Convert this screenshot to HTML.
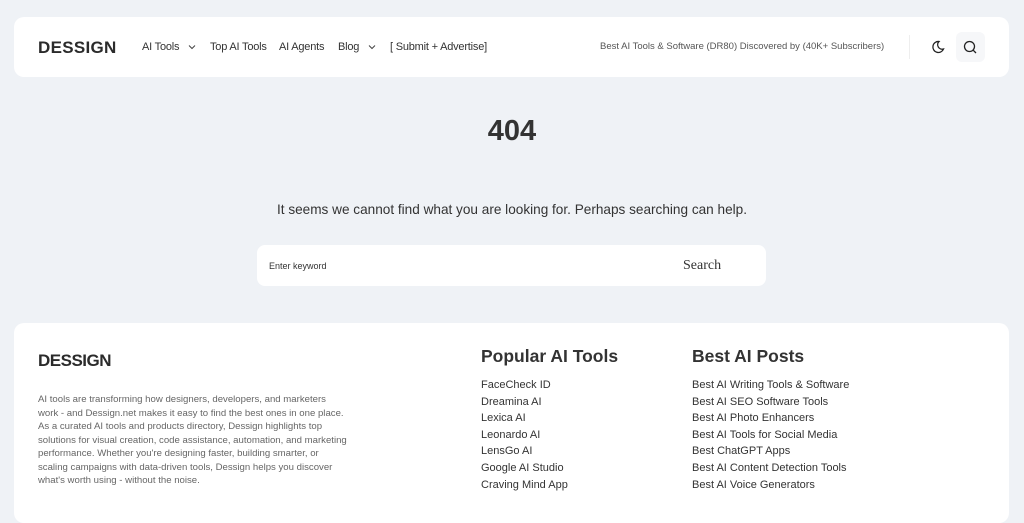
<!DOCTYPE html>
<html><head><meta charset="utf-8"><style>
*{margin:0;padding:0;box-sizing:border-box}
body{width:1024px;height:494px;overflow:hidden;background:#eff2f6;font-family:"Liberation Sans",sans-serif;color:#222;position:relative}
.hdr{position:absolute;left:14px;top:17px;width:995px;height:60px;background:#fff;border-radius:10px}
.logo{position:absolute;left:24px;top:21px;font-size:17px;font-weight:bold;color:#2b2b2b;letter-spacing:.3px}
.nav{position:absolute;top:24px;font-size:11px;color:#333;letter-spacing:-.2px}
.chev{position:absolute;top:27px}
.tag{position:absolute;left:586px;top:24px;font-size:9.5px;color:#555}
.sep{position:absolute;left:895px;top:18px;width:1px;height:24px;background:#eee}
.sbtn{position:absolute;left:942px;top:15px;width:29px;height:30px;background:#f6f7f9;border-radius:6px}
h1{position:absolute;left:0;width:1024px;top:115px;text-align:center;font-size:29px;font-weight:bold;color:#333}
.msg{position:absolute;left:0;width:1024px;top:202px;text-align:center;font-size:13.6px;color:#333}
.sb{position:absolute;left:257px;top:245px;width:509px;height:41px;background:#fff;border-radius:8px}
.sb .p{position:absolute;left:12px;top:16px;font-size:9px;color:#333}
.sb .s{position:absolute;left:426px;top:12px;font-family:"Liberation Serif",serif;font-size:14px;color:#333}
.ft{position:absolute;left:14px;top:323px;width:995px;height:200px;background:#fff;border-radius:10px}
.flogo{position:absolute;left:24px;top:28px;font-size:17px;font-weight:bold;letter-spacing:-.5px;color:#2b2b2b}
.fp{position:absolute;left:24px;top:70px;width:310px;font-size:9.6px;line-height:13.5px;color:#666}
.col{position:absolute;top:23px}
.col h3{font-size:17.5px;font-weight:bold;color:#333;margin-bottom:10px}
.col div{font-size:11px;line-height:16.6px;color:#333}
</style></head><body>
<div class="hdr">
<div class="logo">DESSIGN</div>
<div class="nav" style="left:128px">AI Tools</div>
<svg class="chev" style="left:174px" width="8" height="6" viewBox="0 0 8 6"><path d="M1 1.5L4 4.5 7 1.5" fill="none" stroke="#444" stroke-width="1"/></svg>
<div class="nav" style="left:196px">Top AI Tools</div>
<div class="nav" style="left:265px">AI Agents</div>
<div class="nav" style="left:324px">Blog</div>
<svg class="chev" style="left:354px" width="8" height="6" viewBox="0 0 8 6"><path d="M1 1.5L4 4.5 7 1.5" fill="none" stroke="#444" stroke-width="1"/></svg>
<div class="nav" style="left:376px">[ Submit + Advertise]</div>
<div class="tag">Best AI Tools &amp; Software (DR80) Discovered by (40K+ Subscribers)</div>
<div class="sep"></div>
<svg style="position:absolute;left:917px;top:23px" width="14" height="14" viewBox="0 0 14 14"><path d="M8 1.5A5.5 5.5 0 1 0 12.5 9 4.5 4.5 0 0 1 8 1.5z" fill="none" stroke="#222" stroke-width="1.3"/></svg>
<div class="sbtn"><svg style="position:absolute;left:7px;top:8px" width="15" height="15" viewBox="0 0 15 15"><circle cx="6.5" cy="6.5" r="5" fill="none" stroke="#222" stroke-width="1.3"/><path d="M10.3 10.3L13 13" stroke="#222" stroke-width="1.3"/></svg></div>
</div>
<h1>404</h1>
<div class="msg">It seems we cannot find what you are looking for. Perhaps searching can help.</div>
<div class="sb"><div class="p">Enter keyword</div><div class="s" style="top:13px">Search</div></div>
<div class="ft">
<div class="flogo">DESSIGN</div>
<div class="fp">AI tools are transforming how designers, developers, and marketers work - and Dessign.net makes it easy to find the best ones in one place. As a curated AI tools and products directory, Dessign highlights top solutions for visual creation, code assistance, automation, and marketing performance. Whether you're designing faster, building smarter, or scaling campaigns with data-driven tools, Dessign helps you discover what's worth using - without the noise.</div>
<div class="col" style="left:467px"><h3>Popular AI Tools</h3>
<div>FaceCheck ID</div><div>Dreamina AI</div><div>Lexica AI</div><div>Leonardo AI</div><div>LensGo AI</div><div>Google AI Studio</div><div>Craving Mind App</div></div>
<div class="col" style="left:678px"><h3>Best AI Posts</h3>
<div>Best AI Writing Tools &amp; Software</div><div>Best AI SEO Software Tools</div><div>Best AI Photo Enhancers</div><div>Best AI Tools for Social Media</div><div>Best ChatGPT Apps</div><div>Best AI Content Detection Tools</div><div>Best AI Voice Generators</div></div>
</div>
</body></html>
